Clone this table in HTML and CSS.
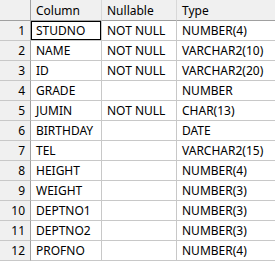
FILE: index.html
```html
<!DOCTYPE html>
<html>
<head>
<meta charset="utf-8">
<link rel="stylesheet" href="styles.css">
</head>
<body>
<table class="grid">
  <colgroup>
    <col class="c-num"><col class="c-name"><col class="c-null"><col class="c-type">
  </colgroup>
  <thead>
    <tr><th class="corner"></th><th>Column</th><th>Nullable</th><th>Type</th></tr>
  </thead>
  <tbody>
    <tr><td class="num">1</td><td class="sel">STUDNO</td><td>NOT NULL</td><td>NUMBER(4)</td></tr>
    <tr><td class="num">2</td><td>NAME</td><td>NOT NULL</td><td>VARCHAR2(10)</td></tr>
    <tr><td class="num">3</td><td>ID</td><td>NOT NULL</td><td>VARCHAR2(20)</td></tr>
    <tr><td class="num">4</td><td>GRADE</td><td></td><td>NUMBER</td></tr>
    <tr><td class="num">5</td><td>JUMIN</td><td>NOT NULL</td><td>CHAR(13)</td></tr>
    <tr><td class="num">6</td><td>BIRTHDAY</td><td></td><td>DATE</td></tr>
    <tr><td class="num">7</td><td>TEL</td><td></td><td>VARCHAR2(15)</td></tr>
    <tr><td class="num">8</td><td>HEIGHT</td><td></td><td>NUMBER(4)</td></tr>
    <tr><td class="num">9</td><td>WEIGHT</td><td></td><td>NUMBER(3)</td></tr>
    <tr><td class="num">10</td><td>DEPTNO1</td><td></td><td>NUMBER(3)</td></tr>
    <tr><td class="num">11</td><td>DEPTNO2</td><td></td><td>NUMBER(3)</td></tr>
    <tr><td class="num">12</td><td>PROFNO</td><td></td><td>NUMBER(4)</td></tr>
  </tbody>
</table>
</body>
</html>
```
FILE: styles.css
```css
html, body {
  margin: 0;
  padding: 0;
  background: #ffffff;
}
.grid {
  border-collapse: separate;
  border-spacing: 0;
  table-layout: fixed;
  width: 275px;
  font-family: "Noto Sans", "DejaVu Sans", sans-serif;
  font-size: 12px;
  color: #000;
}
.c-num { width: 31px; }
.c-name { width: 71px; }
.c-null { width: 75px; }
.c-type { width: 98px; }
.grid th {
  height: 21px;
  padding: 0 0 0 5px;
  background: #f0f0f0;
  border-right: 1px solid #d8d8d8;
  border-bottom: 1px solid #a0a0a0;
  font-weight: normal;
  text-align: left;
  white-space: nowrap;
  overflow: hidden;
  box-sizing: border-box;
}
.grid th.corner {
  border-right: 1px solid #a0a0a0;
}
.grid th:last-child { border-right: none; }
.grid td {
  height: 20px;
  padding: 0 0 0 5px;
  border-right: 1px solid #c8c8c8;
  border-bottom: 1px solid #c8c8c8;
  white-space: nowrap;
  overflow: hidden;
  box-sizing: border-box;
  line-height: 19px;
}
.grid td:last-child { border-right: none; }
.grid td.num {
  background: #f0f0f0;
  text-align: right;
  padding: 0 5px 0 0;
  border-right: 1px solid #a0a0a0;
  border-bottom: 1px solid #c8c8c8;
}
.grid td.sel {
  box-shadow: inset 0 0 0 1px #000;
}
```
